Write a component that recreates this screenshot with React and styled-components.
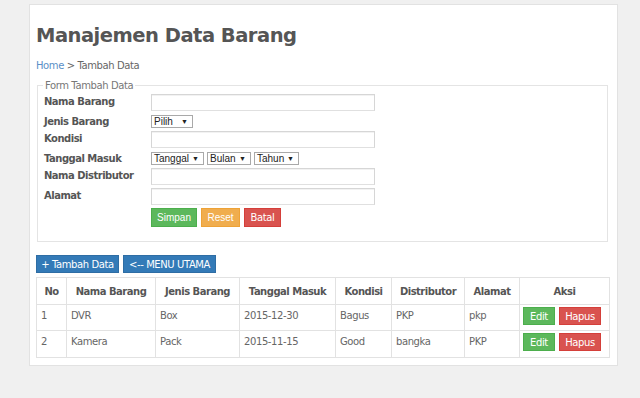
import React from 'react'
import styled, { createGlobalStyle } from 'styled-components'

const GlobalStyle = createGlobalStyle`
  body {
    margin: 0;
    background: #f0f0f0;
    font-family: "DejaVu Sans", Verdana, sans-serif;
    color: #555;
  }
`

const barang = [
  { id: 1, nama: 'DVR', jenis: 'Box', tanggal: '2015-12-30', kondisi: 'Bagus', distributor: 'PKP', alamat: 'pkp' },
  { id: 2, nama: 'Kamera', jenis: 'Pack', tanggal: '2015-11-15', kondisi: 'Good', distributor: 'bangka', alamat: 'PKP' },
]

const colWidths = [30, 89, 84, 96, 56, 73, 55, 90]
const headers = ['No', 'Nama Barang', 'Jenis Barang', 'Tanggal Masuk', 'Kondisi', 'Distributor', 'Alamat', 'Aksi']

function App() {
  return (
    <>
      <GlobalStyle />
      <Page>
        <Title>Manajemen Data Barang</Title>
        <Breadcrumb>
          <a href="#">Home</a> &gt; Tambah Data
        </Breadcrumb>

        <FormBox>
          <legend>Form Tambah Data</legend>
          <FormGrid>
            <Label>Nama Barang</Label>
            <TextInput />

            <Label>Jenis Barang</Label>
            <Selects>
              <Select w={42}>Pilih <Arrow>▼</Arrow></Select>
            </Selects>

            <Label>Kondisi</Label>
            <TextInput />

            <Label>Tanggal Masuk</Label>
            <Selects>
              <Select w={53}>Tanggal <Arrow>▼</Arrow></Select>
              <Select w={44}>Bulan <Arrow>▼</Arrow></Select>
              <Select w={45}>Tahun <Arrow>▼</Arrow></Select>
            </Selects>

            <Label>Nama Distributor</Label>
            <TextInput />

            <Label>Alamat</Label>
            <TextInput />

            <span />
            <ButtonRow>
              <Btn color="#5cb85c" border="#4cae4c" w={46} arial>Simpan</Btn>
              <Btn color="#f0ad4e" border="#eea236" w={39} arial>Reset</Btn>
              <Btn color="#d9534f" border="#d43f3a" w={37}>Batal</Btn>
            </ButtonRow>
          </FormGrid>
        </FormBox>

        <Toolbar>
          <BlueBtn w={83}>+ Tambah Data</BlueBtn>
          <BlueBtn w={93}>&lt;-- MENU UTAMA</BlueBtn>
        </Toolbar>

        <Table>
          <colgroup>
            {colWidths.map((w, i) => <col key={i} style={{ width: w }} />)}
          </colgroup>
          <thead>
            <tr>
              {headers.map(h => <th key={h}>{h}</th>)}
            </tr>
          </thead>
          <tbody>
            {barang.map(b => (
              <tr key={b.id}>
                <td>{b.id}</td>
                <td>{b.nama}</td>
                <td>{b.jenis}</td>
                <td>{b.tanggal}</td>
                <td>{b.kondisi}</td>
                <td>{b.distributor}</td>
                <td>{b.alamat}</td>
                <ActionCell>
                  <SmallBtn color="#5cb85c" border="#4cae4c" w={32}>Edit</SmallBtn>
                  <SmallBtn color="#d9534f" border="#d43f3a" w={42}>Hapus</SmallBtn>
                </ActionCell>
              </tr>
            ))}
          </tbody>
        </Table>
      </Page>
    </>
  )
}

export default App

const Page = styled.div`
  width: 573px;
  margin: 4px 0 0 29px;
  padding: 19px 8px 7px 6px;
  background: #fff;
  border: 1px solid #e2e2e2;
  letter-spacing: -0.4px;
`

const Title = styled.h1`
  margin: 0;
  font-size: 19.5px;
  line-height: 24px;
  font-weight: bold;
  letter-spacing: -0.5px;
  color: #555;
`

const Breadcrumb = styled.div`
  margin-top: 11px;
  font-size: 10px;
  line-height: 14px;
  color: #666;

  a {
    color: #5b8fc7;
    text-decoration: none;
  }
`

const FormBox = styled.fieldset`
  margin: 7px 1px 0 1px;
  padding: 3px 6px 14px 6px;
  border: 1px solid #e4e4e4;

  legend {
    padding: 0 2px;
    margin-left: -1px;
    font-size: 10px;
    color: #777;
  }
`

const FormGrid = styled.div`
  display: grid;
  grid-template-columns: 107px auto;
  row-gap: 3px;
  align-items: start;
`

const Label = styled.label`
  font-size: 10px;
  font-weight: bold;
  letter-spacing: -0.5px;
  color: #555;
  line-height: 13px;
  padding-top: 1px;
`

const TextInput = styled.input`
  box-sizing: border-box;
  width: 224px;
  height: 17px;
  margin: 0;
  border: 1px solid #d6d6d6;
  border-bottom-color: #e0e0e0;
  box-shadow: inset 0 1px 0 #f2f2f2;
`

const Selects = styled.div`
  display: flex;
  gap: 3px;
  padding-top: 1px;
`

const Select = styled.div`
  box-sizing: border-box;
  width: ${p => p.w}px;
  height: 13px;
  display: flex;
  align-items: center;
  justify-content: space-between;
  padding: 0 4px 0 2px;
  border: 1px solid #a9a9a9;
  font-family: "Liberation Sans", Arial, sans-serif;
  font-size: 10px;
  letter-spacing: 0;
  color: #222;
`

const Arrow = styled.span`
  font-size: 7px;
`

const ButtonRow = styled.div`
  display: flex;
  gap: 4px;
`

const Btn = styled.button`
  box-sizing: border-box;
  width: ${p => p.w}px;
  height: 19px;
  padding: 0;
  background: ${p => p.color};
  border: 1px solid ${p => p.border};
  color: #fff;
  font-family: ${p => (p.arial ? '"Liberation Sans", Arial, sans-serif' : '"DejaVu Sans", Verdana, sans-serif')};
  font-size: 10px;
  letter-spacing: ${p => (p.arial ? '0' : '-0.4px')};
`

const Toolbar = styled.div`
  display: flex;
  gap: 4px;
  margin-top: 13px;
`

const BlueBtn = styled.button`
  box-sizing: border-box;
  width: ${p => p.w}px;
  height: 18px;
  padding: 0;
  background: #337ab7;
  border: 1px solid #2e6da4;
  color: #fff;
  font-family: "DejaVu Sans", Verdana, sans-serif;
  font-size: 10px;
  letter-spacing: -0.4px;
`

const Table = styled.table`
  margin-top: 4px;
  width: 573px;
  border-collapse: collapse;
  table-layout: fixed;
  font-size: 10px;
  color: #666;

  th, td {
    border: 1px solid #e2e2e2;
    padding: 0 4px;
  }

  th {
    height: 26px;
    text-align: center;
    font-weight: bold;
    letter-spacing: -0.5px;
    color: #555;
  }

  td {
    height: 26px;
    vertical-align: top;
    padding-top: 5px;
    box-sizing: border-box;
  }

  tbody tr:last-child td {
    height: 27px;
  }
`

const ActionCell = styled.td`
  && {
    padding: 2px 3px 0 3px;
    white-space: nowrap;
  }
`

const SmallBtn = styled.button`
  box-sizing: border-box;
  width: ${p => p.w}px;
  height: 18px;
  padding: 0;
  margin-right: 4px;
  background: ${p => p.color};
  border: 1px solid ${p => p.border};
  color: #fff;
  font-family: "DejaVu Sans", Verdana, sans-serif;
  font-size: 10px;
  letter-spacing: -0.4px;
`
